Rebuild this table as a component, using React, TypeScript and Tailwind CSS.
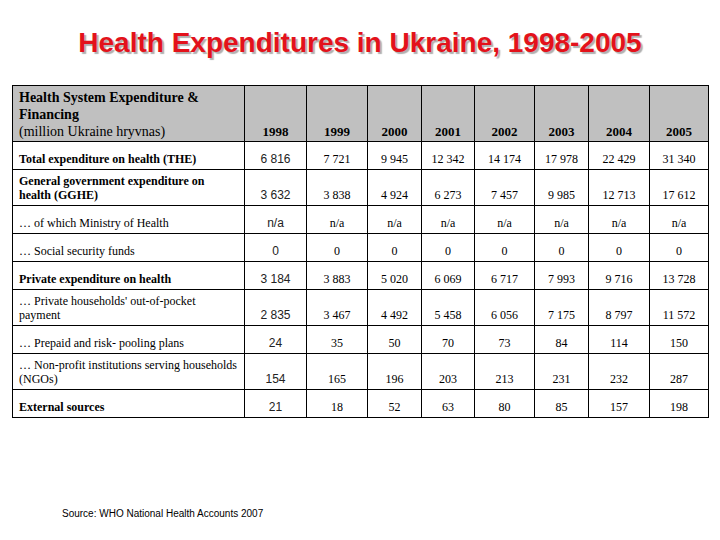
import React from 'react';

// Data table: label lines, bold?, two-line row?, values 1998..2005
const years = ['1998', '1999', '2000', '2001', '2002', '2003', '2004', '2005'];

const rows = [
  { label: ['Total expenditure on health (THE)'], bold: true, values: ['6 816', '7 721', '9 945', '12 342', '14 174', '17 978', '22 429', '31 340'] },
  { label: ['General government expenditure on', 'health (GGHE)'], bold: true, values: ['3 632', '3 838', '4 924', '6 273', '7 457', '9 985', '12 713', '17 612'] },
  { label: ['\u2026 of which Ministry of Health'], bold: false, values: ['n/a', 'n/a', 'n/a', 'n/a', 'n/a', 'n/a', 'n/a', 'n/a'] },
  { label: ['\u2026 Social security funds'], bold: false, values: ['0', '0', '0', '0', '0', '0', '0', '0'] },
  { label: ['Private expenditure on health'], bold: true, values: ['3 184', '3 883', '5 020', '6 069', '6 717', '7 993', '9 716', '13 728'] },
  { label: ["\u2026 Private households' out-of-pocket", 'payment'], bold: false, values: ['2 835', '3 467', '4 492', '5 458', '6 056', '7 175', '8 797', '11 572'] },
  { label: ['\u2026 Prepaid and risk- pooling plans'], bold: false, values: ['24', '35', '50', '70', '73', '84', '114', '150'] },
  { label: ['\u2026 Non-profit institutions serving households', '(NGOs)'], bold: false, values: ['154', '165', '196', '203', '213', '231', '232', '287'] },
  { label: ['External sources'], bold: true, values: ['21', '18', '52', '63', '80', '85', '157', '198'] },
];

const colWidths = ['w-[232px]', 'w-[62px]', 'w-[61px]', 'w-[54px]', 'w-[53px]', 'w-[60px]', 'w-[54px]', 'w-[61px]', 'w-[59px]'];

export default function App() {
  return (
    <div className="w-[720px] h-[540px] bg-white overflow-hidden relative">
      {/* Title */}
      <h1 className="pt-[28px] text-center font-['Liberation_Sans',Arial,sans-serif] font-bold text-[28px] leading-[30px] text-[#e3121b] [text-shadow:2px_2px_1px_#b0b0b0]">
        Health Expenditures in Ukraine, 1998-2005
      </h1>

      {/* Table */}
      <table className="mt-[27px] ml-[12px] w-[697px] table-fixed border-collapse font-['Liberation_Serif','Times_New_Roman',serif] text-black">
        <colgroup>
          {colWidths.map((w, i) => (
            <col key={i} className={w} />
          ))}
        </colgroup>
        <thead>
          <tr className="h-[56px] bg-[#c0c0c0]">
            <th className="border border-black align-bottom text-left font-normal pl-[6px] pb-[1px] text-[14px] leading-[17px]">
              <span className="font-bold">Health System Expenditure &amp; Financing</span>
              <br />
              (million Ukraine hryvnas)
            </th>
            {years.map(y => (
              <th key={y} className="border border-black align-bottom text-center font-bold pb-[1px] text-[13px] leading-[17px]">
                {y}
              </th>
            ))}
          </tr>
        </thead>
        <tbody>
          {rows.map(r => (
            <tr key={r.label[0]} className={r.label.length > 1 ? 'h-[36px]' : 'h-[28px]'}>
              <td
                className={
                  'border border-black align-bottom text-left pl-[6px] pr-[4px] pb-[3px] text-[12px] leading-[14px] ' +
                  (r.bold ? 'font-bold' : 'font-normal')
                }
              >
                {r.label.map((line, j) => (
                  <div key={j}>{line}</div>
                ))}
              </td>
              {r.values.map((v, i) =>
                i === 0 ? (
                  <td key={i} className="border border-black align-bottom text-center pb-[3px] font-['Liberation_Sans',Arial,sans-serif] text-[12px] leading-[14px] text-[#222]">
                    {v}
                  </td>
                ) : (
                  <td key={i} className="border border-black align-bottom text-center pb-[3px] text-[12px] leading-[14px]">
                    {v}
                  </td>
                )
              )}
            </tr>
          ))}
        </tbody>
      </table>

      {/* Source */}
      <p className="mt-[90px] ml-[62px] font-['Liberation_Sans',Arial,sans-serif] text-[10px] leading-[12px] text-black">
        Source: WHO National Health Accounts 2007
      </p>
    </div>
  );
}
